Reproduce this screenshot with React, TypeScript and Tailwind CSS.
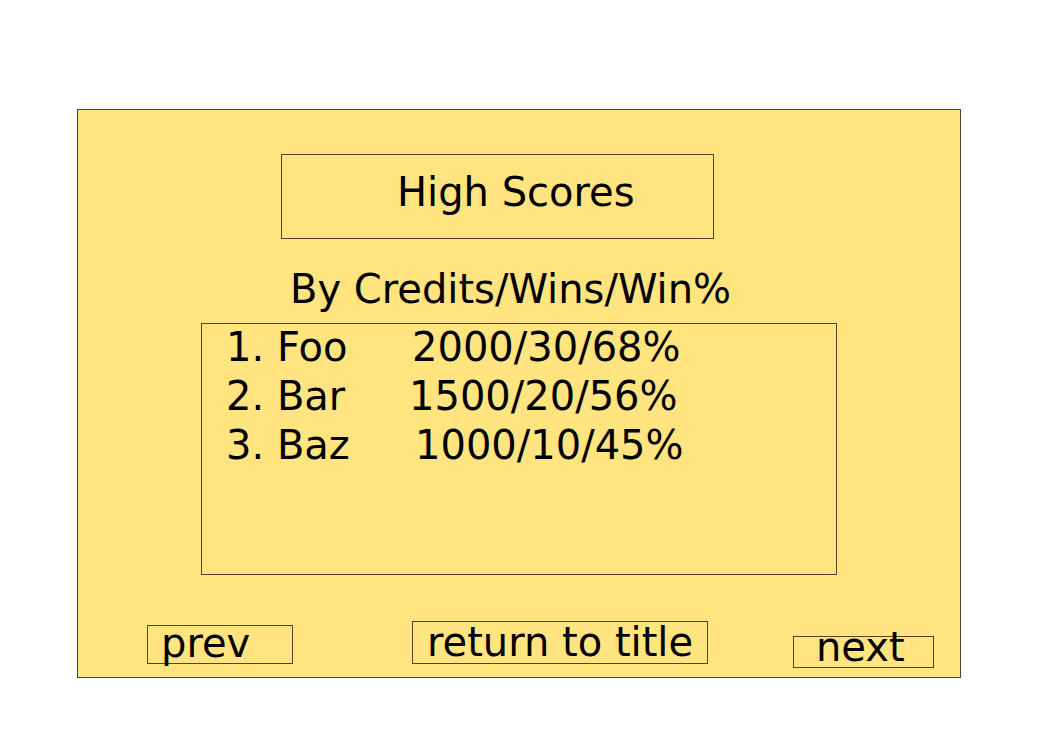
import React from "react";

const rows = [
  { name: "1. Foo", score: "2000/30/68%", nameW: "w-[186px]" },
  { name: "2. Bar", score: "1500/20/56%", nameW: "w-[183px]" },
  { name: "3. Baz", score: "1000/10/45%", nameW: "w-[189px]" },
];

export default function App() {
  return (
    <div className="w-[1053px] h-[745px] bg-white pt-[109px] pl-[77px] font-['DejaVu_Sans',sans-serif] text-black text-[40px] leading-[46px]">
      <div className="w-[884px] h-[569px] bg-[#ffe480] border border-black/70 flex flex-col items-start">
        {/* Title */}
        <div className="ml-[203px] mt-[44px] w-[433px] h-[85px] border border-black/70 pl-[115px] pt-[14px] whitespace-nowrap">
          High Scores
        </div>

        <div className="ml-[212px] mt-[27px] whitespace-nowrap">By Credits/Wins/Win%</div>

        {/* Score list */}
        <div className="ml-[123px] mt-[11px] w-[636px] h-[252px] border border-black/70 pl-[24px] flex flex-col gap-[3px]">
          {rows.map((r) => (
            <div key={r.name} className="flex whitespace-nowrap">
              <span className={r.nameW}>{r.name}</span>
              <span>{r.score}</span>
            </div>
          ))}
        </div>

        {/* Bottom buttons */}
        <div className="mt-[46px] flex items-start">
          <button className="ml-[69px] mt-[4px] w-[146px] h-[39px] border border-black/70 text-left">
            <div className="-mt-[6px] pl-[13px] whitespace-nowrap">prev</div>
          </button>
          <button className="ml-[119px] w-[296px] h-[43px] border border-black/70 text-left">
            <div className="-mt-[3px] pl-[14px] whitespace-nowrap">return to title</div>
          </button>
          <button className="ml-[85px] mt-[15px] w-[141px] h-[32px] border border-black/70 text-left">
            <div className="-mt-[13px] pl-[22px] whitespace-nowrap">next</div>
          </button>
        </div>
      </div>
    </div>
  );
}
